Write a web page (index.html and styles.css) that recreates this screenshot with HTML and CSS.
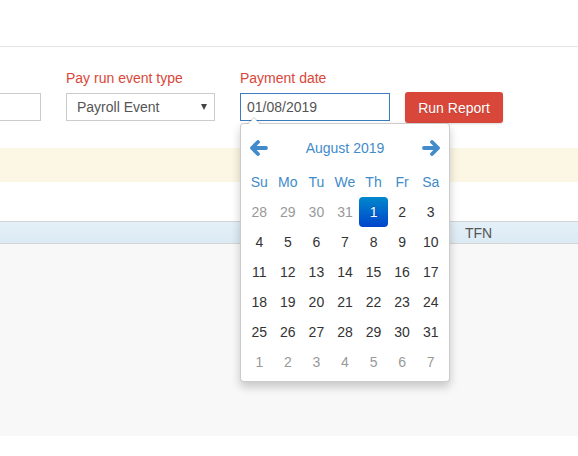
FILE: index.html
```html
<!DOCTYPE html>
<html lang="en">
<head>
    <meta charset="UTF-8">
    <title>Pay Run Report</title>
    <link rel="stylesheet" href="styles.css">
</head>
<body>
    <header class="topbar"></header>

    <main>
        <div class="filters">
            <div class="field field-first">
                <label>&nbsp;</label>
                <input class="text-input" type="text" value="">
            </div>
            <div class="field">
                <label>Pay run event type</label>
                <div class="select-box">
                    <span>Payroll Event</span>
                    <span class="caret"></span>
                </div>
            </div>
            <div class="field field-date">
                <label>Payment date</label>
                <input class="text-input focused" type="text" value="01/08/2019">

                <div class="datepicker">
                    <table>
                        <thead>
                            <tr class="nav-row">
                                <th class="arrow">
                                    <svg width="18" height="16" viewBox="0 0 18 16"><path d="M8 2 L2 8 L8 14 M3 8 H16" fill="none" stroke="#428bca" stroke-width="3.8" stroke-linecap="round" stroke-linejoin="round"/></svg>
                                </th>
                                <th colspan="5" class="month">August 2019</th>
                                <th class="arrow">
                                    <svg width="18" height="16" viewBox="0 0 18 16"><path d="M10 2 L16 8 L10 14 M15 8 H2" fill="none" stroke="#428bca" stroke-width="3.8" stroke-linecap="round" stroke-linejoin="round"/></svg>
                                </th>
                            </tr>
                            <tr class="dow">
                                <th>Su</th><th>Mo</th><th>Tu</th><th>We</th><th>Th</th><th>Fr</th><th>Sa</th>
                            </tr>
                        </thead>
                        <tbody>
                            <tr><td class="old">28</td><td class="old">29</td><td class="old">30</td><td class="old">31</td><td class="active">1</td><td>2</td><td>3</td></tr>
                            <tr><td>4</td><td>5</td><td>6</td><td>7</td><td>8</td><td>9</td><td>10</td></tr>
                            <tr><td>11</td><td>12</td><td>13</td><td>14</td><td>15</td><td>16</td><td>17</td></tr>
                            <tr><td>18</td><td>19</td><td>20</td><td>21</td><td>22</td><td>23</td><td>24</td></tr>
                            <tr><td>25</td><td>26</td><td>27</td><td>28</td><td>29</td><td>30</td><td>31</td></tr>
                            <tr><td class="new">1</td><td class="new">2</td><td class="new">3</td><td class="new">4</td><td class="new">5</td><td class="new">6</td><td class="new">7</td></tr>
                        </tbody>
                    </table>
                </div>
            </div>
            <button class="run-btn">Run Report</button>
        </div>

        <div class="notice"></div>

        <div class="grid-head">
            <span class="col-tfn">TFN</span>
        </div>
        <div class="grid-body"></div>
    </main>
</body>
</html>
```

FILE: styles.css
```css
body {
    margin: 0;
    font-family: "Liberation Sans", Arial, sans-serif;
    font-size: 14px;
    color: #333;
    background: #fff;
}
.topbar {
    height: 46px;
    border-bottom: 1px solid #e5e5e5;
}
.filters {
    display: flex;
    align-items: flex-end;
    gap: 25px;
    margin-left: -109px;
    padding-top: 23px;
}
.field {
    display: flex;
    flex-direction: column;
}
.field label {
    color: #d9473a;
    height: 16px;
    margin-bottom: 7px;
}
.field-first .text-input {
    width: 150px;
}
.field-date {
    position: relative;
}
.text-input {
    box-sizing: border-box;
    width: 150px;
    height: 28px;
    padding: 0 6px;
    border: 1px solid #ccc;
    font: inherit;
    color: #555;
    background: #fff;
    outline: none;
}
.text-input.focused {
    border-color: #3b7dbf;
}
.select-box {
    box-sizing: border-box;
    width: 149px;
    height: 28px;
    padding: 0 10px;
    border: 1px solid #ccc;
    color: #555;
    display: flex;
    align-items: center;
    justify-content: space-between;
}
.caret {
    width: 0;
    height: 0;
    border-left: 3px solid transparent;
    border-right: 3px solid transparent;
    border-top: 6px solid #444;
    margin-right: -3px;
}
.run-btn {
    margin-left: -10px;
    margin-bottom: -2px;
    width: 98px;
    height: 31px;
    border: none;
    border-radius: 3px;
    background: #d9473a;
    color: #fff;
    font: inherit;
    text-shadow: 0 1px 1px rgba(0,0,0,0.15);
    box-shadow: 0 1px 2px rgba(0,0,0,0.15);
}

.notice {
    margin-top: 27px;
    height: 34px;
    background: #fcf7e4;
}
.grid-head {
    margin-top: 39px;
    height: 21px;
    border-top: 1px solid #d4d4d4;
    border-bottom: 1px solid #d4d4d4;
    background: linear-gradient(to bottom, #e4f0f8, #dceaf3);
    position: relative;
}
.col-tfn {
    position: absolute;
    left: 465px;
    top: 3px;
    color: #555;
}
.grid-body {
    height: 192px;
    background: #f8f8f8;
}

/* datepicker dropdown */
.datepicker {
    position: absolute;
    top: 53px;
    left: 0;
    width: 200px;
    padding: 4px;
    background: #fff;
    border: 1px solid rgba(0,0,0,0.2);
    border-radius: 4px;
    box-shadow: 0 5px 10px rgba(0,0,0,0.2);
    z-index: 10;
}
.datepicker::before {
    content: "";
    position: absolute;
    top: -7px;
    left: 6px;
    border-left: 7px solid transparent;
    border-right: 7px solid transparent;
    border-bottom: 7px solid rgba(0,0,0,0.2);
}
.datepicker::after {
    content: "";
    position: absolute;
    top: -6px;
    left: 7px;
    border-left: 6px solid transparent;
    border-right: 6px solid transparent;
    border-bottom: 6px solid #fff;
}
.datepicker table {
    width: 100%;
    border-collapse: separate;
    border-spacing: 0;
    table-layout: fixed;
}
.datepicker th,
.datepicker td {
    text-align: center;
    padding: 0;
    font-weight: normal;
}
.nav-row th {
    height: 39px;
    color: #428bca;
}
.nav-row .arrow svg {
    display: block;
    margin: 0 auto;
}
.dow th {
    height: 30px;
    color: #428bca;
}
.datepicker td {
    height: 30px;
    color: #333;
    border-radius: 4px;
}
.datepicker td.old,
.datepicker td.new {
    color: #999;
}
.datepicker td.active {
    background: linear-gradient(to bottom, #0088cc, #0044cc);
    color: #fff;
    text-shadow: 0 -1px 0 rgba(0,0,0,0.25);
}
```
